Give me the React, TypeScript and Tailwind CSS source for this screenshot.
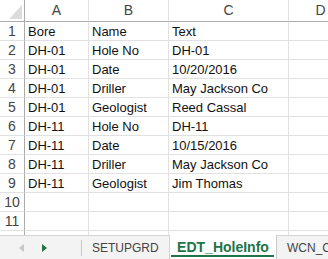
import React from "react";

const rows: string[][] = [
  ["Bore", "Name", "Text"],
  ["DH-01", "Hole No", "DH-01"],
  ["DH-01", "Date", "10/20/2016"],
  ["DH-01", "Driller", "May Jackson Co"],
  ["DH-01", "Geologist", "Reed Cassal"],
  ["DH-11", "Hole No", "DH-11"],
  ["DH-11", "Date", "10/15/2016"],
  ["DH-11", "Driller", "May Jackson Co"],
  ["DH-11", "Geologist", "Jim Thomas"],
  ["", "", ""],
  ["", "", ""],
];

export default function App() {
  return (
    <div
      className="w-[328px] h-[259px] overflow-hidden bg-white flex flex-col"
      style={{ fontFamily: '"Liberation Sans", Arial, sans-serif' }}
    >
      <div className="grid grid-cols-[25px_64px_80px_120px_64px] flex-1 overflow-hidden content-start">
        {/* header */}
        <div className="h-[22px] border-b border-r border-[#ababab] relative">
          <svg className="absolute left-[9px] top-[5px]" width="13" height="14" viewBox="0 0 13 14">
            <polygon points="13,0 13,14 0,14" fill="#dcdcdc" />
          </svg>
        </div>
        {["A", "B", "C", "D"].map((c) => (
          <div
            key={c}
            className="h-[22px] border-b border-b-[#ababab] border-r border-r-[#e1e1e1] flex items-center justify-center text-[14px] text-[#444]"
          >
            {c}
          </div>
        ))}
        {rows.map((r, i) => (
          <React.Fragment key={i}>
            <div className="h-[19px] border-b border-b-[#e1e1e1] border-r border-r-[#ababab] flex items-center justify-center text-[14px] text-[#444] pt-[1px]">
              {i + 1}
            </div>
            {r.map((t, j) => (
              <div
                key={j}
                className="h-[19px] border-b border-r border-[#e1e1e1] flex items-center pl-[3px] pt-[1px] text-[13px] text-[#111] whitespace-nowrap overflow-hidden"
              >
                {t}
              </div>
            ))}
            <div className="h-[19px] border-b border-r border-[#e1e1e1]" />
          </React.Fragment>
        ))}
        <div className="h-[4px] border-r border-[#ababab]" />
        <div className="h-[4px] border-r border-[#e1e1e1]" />
        <div className="h-[4px] border-r border-[#e1e1e1]" />
        <div className="h-[4px] border-r border-[#e1e1e1]" />
        <div className="h-[4px] border-r border-[#e1e1e1]" />
      </div>
      <div className="h-[24px] shrink-0 bg-[#f3f3f3] border-t border-[#d4d4d4] flex items-stretch relative">
        <div className="w-[81px] flex items-center">
          <svg className="ml-[19px]" width="5" height="8" viewBox="0 0 5 8">
            <polygon points="5,0 5,8 0,4" fill="#c6c6c6" />
          </svg>
          <svg className="ml-[18px]" width="5" height="8" viewBox="0 0 5 8">
            <polygon points="0,0 0,8 5,4" fill="#217346" />
          </svg>
        </div>
        <div className="w-px h-[16px] self-center bg-[#c8c8c8]" />
        <div className="w-[88px] flex items-center pl-[10px] text-[12px] text-[#444] border-r border-[#d4d4d4]">
          SETUPGRD
        </div>
        <div className="w-[106px] bg-white flex items-center justify-center text-[14px] font-bold text-[#217346] relative -mt-px">
          EDT_HoleInfo
          <div className="absolute left-[1px] right-[2px] bottom-[2px] h-[2px] bg-[#217346]" />
        </div>
        <div className="flex-1 flex items-center pl-[10px] text-[12px] text-[#444] border-l border-[#c8c8c8] whitespace-nowrap overflow-hidden">
          WCN_C
        </div>
      </div>
    </div>
  );
}
